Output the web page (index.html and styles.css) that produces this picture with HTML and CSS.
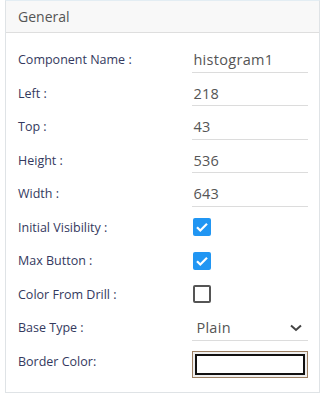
FILE: index.html
```html
<!DOCTYPE html>
<html>
<head>
	<title>properties</title>
	<link rel="stylesheet" href="styles.css">
</head>
<body>
	<div class="panel">
		<div class="panel-head">General</div>
		<div class="panel-body">
			<div class="row">
				<label class="lbl">Component Name :</label>
				<div class="field"><span class="val">histogram1</span></div>
			</div>
			<div class="row">
				<label class="lbl">Left :</label>
				<div class="field"><span class="val">218</span></div>
			</div>
			<div class="row">
				<label class="lbl">Top :</label>
				<div class="field"><span class="val">43</span></div>
			</div>
			<div class="row">
				<label class="lbl">Height :</label>
				<div class="field"><span class="val">536</span></div>
			</div>
			<div class="row">
				<label class="lbl">Width :</label>
				<div class="field"><span class="val">643</span></div>
			</div>
			<div class="row">
				<label class="lbl">Initial Visibility :</label>
				<div class="check on">
					<svg width="18" height="18" viewBox="0 0 18 18"><path d="M4 9.2l3.3 3.3L14 5.8" fill="none" stroke="#fff" stroke-width="2.2"/></svg>
				</div>
			</div>
			<div class="row">
				<label class="lbl">Max Button :</label>
				<div class="check on">
					<svg width="18" height="18" viewBox="0 0 18 18"><path d="M4 9.2l3.3 3.3L14 5.8" fill="none" stroke="#fff" stroke-width="2.2"/></svg>
				</div>
			</div>
			<div class="row">
				<label class="lbl">Color From Drill :</label>
				<div class="check"></div>
			</div>
			<div class="row">
				<label class="lbl">Base Type :</label>
				<div class="field select">
					<span class="val">Plain</span>
					<svg width="12" height="8" viewBox="0 0 12 8"><path d="M1 1.5l5 4.5 5-4.5" fill="none" stroke="#444" stroke-width="2"/></svg>
				</div>
			</div>
			<div class="row">
				<label class="lbl">Border Color:</label>
				<div class="swatch"><div class="swatch-in"></div></div>
			</div>
		</div>
	</div>
</body>
</html>
```

FILE: styles.css
```css
body{
	margin:0;
	font-family:"Open Sans",sans-serif;
	background:#fff;
}
.panel{
	margin-left:5px;
	border:1px solid #dfe3e6;
	border-top-color:#e3edf3;
	box-sizing:border-box;
	width:315px;
	height:393px;
}
.panel-head{
	height:31px;
	line-height:31px;
	padding-left:12px;
	background:#f8f8f8;
	border-bottom:1px solid #dedede;
	font-size:14px;
	color:#555;
}
.panel-body{
	padding:10px 11px 0 12px;
}
.row{
	display:flex;
	align-items:center;
	height:33.5px;
}
.lbl{
	width:175px;
	font-size:12.5px;
	color:#34395e;
}
.field{
	width:116px;
	height:25px;
	display:flex;
	align-items:center;
	border-bottom:1px solid #dcdcdc;
	margin-top:1px;
	box-sizing:border-box;
	padding-left:1px;
}
.val{
	font-size:14.5px;
	letter-spacing:0.3px;
	color:#555;
}
.select{
	justify-content:space-between;
	padding-left:4px;
	padding-right:6px;
}
.check{
	width:18px;
	height:18px;
	box-sizing:border-box;
	border:2px solid #555;
	border-radius:2px;
}
.check.on{
	background:#2196f3;
	border:none;
}
.check svg{
	display:block;
}
.swatch{
	width:116px;
	height:27px;
	box-sizing:border-box;
	border:1px solid #9c7f62;
	background:#efefef;
	padding:2px;
	margin-top:6px;
}
.swatch-in{
	height:100%;
	box-sizing:border-box;
	border:2px solid #111;
	background:#fff;
}
```
